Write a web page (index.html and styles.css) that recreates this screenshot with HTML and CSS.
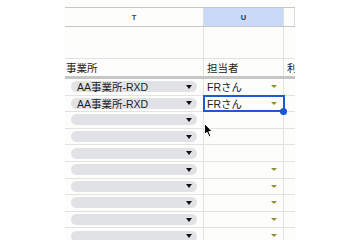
FILE: index.html
```html
<!DOCTYPE html>
<html lang="ja">
  <head>
    <meta charset="UTF-8" />
    <title>sheet</title>
    <link rel="stylesheet" href="styles.css">
  </head>
  <body>
    <div class="sheet">
      <div class="cols">
        <div class="col">T</div>
        <div class="col active">U</div>
        <div class="col"></div>
      </div>
      <div class="row tall">
        <div class="cell"></div><div class="cell"></div><div class="cell"></div>
      </div>
      <div class="row head">
        <div class="cell">事業所</div>
        <div class="cell pad">担当者</div>
        <div class="cell pad">利用</div>
      </div>

      <div class="row">
        <div class="cell"><span class="chip">AA事業所-RXD<i class="caret"></i></span></div>
        <div class="cell pad">FRさん<i class="drop"></i></div>
        <div class="cell"></div>
      </div>
      <div class="row">
        <div class="cell"><span class="chip">AA事業所-RXD<i class="caret"></i></span></div>
        <div class="cell pad selected">FRさん<i class="drop"></i><b class="handle"></b></div>
        <div class="cell"></div>
      </div>
      <div class="row">
        <div class="cell"><span class="chip"><i class="caret"></i></span></div>
        <div class="cell pad"></div>
        <div class="cell"></div>
      </div>
      <div class="row">
        <div class="cell"><span class="chip"><i class="caret"></i></span></div>
        <div class="cell pad"></div>
        <div class="cell"></div>
      </div>
      <div class="row">
        <div class="cell"><span class="chip"><i class="caret"></i></span></div>
        <div class="cell pad"></div>
        <div class="cell"></div>
      </div>
      <div class="row">
        <div class="cell"><span class="chip"><i class="caret"></i></span></div>
        <div class="cell pad"><i class="drop"></i></div>
        <div class="cell"></div>
      </div>
      <div class="row">
        <div class="cell"><span class="chip"><i class="caret"></i></span></div>
        <div class="cell pad"><i class="drop"></i></div>
        <div class="cell"></div>
      </div>
      <div class="row">
        <div class="cell"><span class="chip"><i class="caret"></i></span></div>
        <div class="cell pad"><i class="drop"></i></div>
        <div class="cell"></div>
      </div>
      <div class="row">
        <div class="cell"><span class="chip"><i class="caret"></i></span></div>
        <div class="cell pad"><i class="drop"></i></div>
        <div class="cell"></div>
      </div>
      <div class="row">
        <div class="cell"><span class="chip"><i class="caret"></i></span></div>
        <div class="cell pad"><i class="drop"></i></div>
        <div class="cell"></div>
      </div>

      <svg class="cursor" width="10" height="15" viewBox="0 0 10 15">
        <path d="M0.5 0.5 L0.5 11.5 L3 9.2 L5 13.8 L6.8 13 L4.9 8.6 L8.3 8.6 Z" fill="#000" stroke="#fff" stroke-width="1"/>
      </svg>
    </div>
  </body>
</html>
```

FILE: styles.css
```css
body {
  margin: 0;
  background-color: #ffffff;
}

.sheet {
  position: relative;
  margin-left: 65px;
  width: 230px;
  height: 240px;
  padding-top: 7px;
  box-sizing: border-box;
  overflow: hidden;
  background-color: #fdfdfb;
  font-family: "Liberation Sans", "Noto Sans CJK JP", sans-serif;
  font-size: 10.5px;
  color: #222;
}

.cols,
.row {
  display: grid;
  grid-template-columns: 139px 80px 11px;
}

.cols {
  height: 20px;
  border-top: 1px solid #c6c6c6;
  border-bottom: 1px solid #c6c6c6;
  box-sizing: border-box;
}

.col {
  display: flex;
  align-items: center;
  justify-content: center;
  font-size: 7.5px;
  font-weight: bold;
  color: #444;
  border-right: 1px solid #dcdcdc;
}

.col.active {
  background-color: #c9daf8;
  color: #1f2d4f;
}

.row {
  height: 16.6px;
  border-bottom: 1px solid #e2e2e2;
  box-sizing: border-box;
}

.row.tall {
  height: 32px;
}

.row.head {
  height: 20px;
  border-bottom: 3px solid #c6c6c6;
}

.cell {
  position: relative;
  display: flex;
  align-items: center;
  white-space: nowrap;
  overflow: hidden;
  border-right: 1px solid #e2e2e2;
  padding-left: 1px;
}

.cell:last-child {
  border-right: 0;
}

.cell.pad {
  padding-left: 3px;
}

.chip {
  display: flex;
  align-items: center;
  box-sizing: border-box;
  width: 126px;
  height: 11px;
  margin-left: 5px;
  padding: 0 6px;
  border-radius: 6px;
  background-color: #e1e2e6;
  color: #1e1e1e;
}

.caret {
  margin-left: auto;
  margin-right: -1px;
  width: 0;
  height: 0;
  border-left: 3.5px solid transparent;
  border-right: 3.5px solid transparent;
  border-top: 4px solid #111;
}

.drop {
  position: absolute;
  right: 6px;
  top: 6px;
  width: 0;
  height: 0;
  border-left: 3px solid transparent;
  border-right: 3px solid transparent;
  border-top: 3.5px solid #8c8f35;
}

.selected {
  overflow: visible;
  outline: 2px solid #1c5ad2;
  outline-offset: -1px;
  z-index: 1;
}

.handle {
  position: absolute;
  right: -4px;
  bottom: -4px;
  width: 7px;
  height: 7px;
  border-radius: 50%;
  background-color: #1a57d4;
}

.cursor {
  position: absolute;
  left: 139px;
  top: 123px;
  z-index: 2;
}
```
